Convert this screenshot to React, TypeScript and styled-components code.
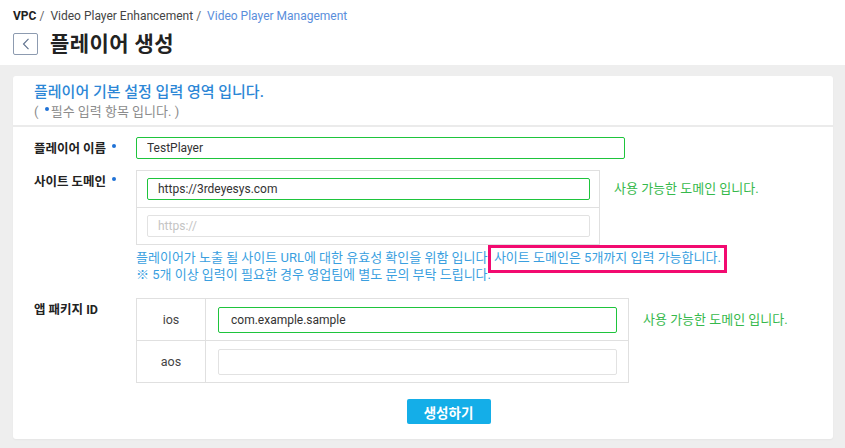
import React from 'react';
import styled, { createGlobalStyle } from 'styled-components';

const GlobalStyle = createGlobalStyle`
  html, body { margin: 0; padding: 0; background: #eeeeee; }
  body { font-family: Roboto, "Noto Sans CJK KR", sans-serif; color: #333; }
  * { box-sizing: border-box; }
`;

const Page = styled.div`
  min-height: 448px;
  background: #eeeeee;
`;

const Header = styled.header`
  background: #fff;
  height: 65px;
  padding: 8px 13px 0;
`;

const Breadcrumb = styled.nav`
  display: flex;
  align-items: center;
  font-size: 12px;
  line-height: 16px;
  color: #444;
`;

const Crumb = styled.span<{ $variant?: 'root' | 'current' }>`
  font-weight: ${(p) => (p.$variant === 'root' ? 700 : 400)};
  color: ${(p) => (p.$variant === 'root' ? '#222' : p.$variant === 'current' ? '#5a8edb' : '#444')};
`;

const Sep = styled.span`
  margin: 0 6px 0 3px;
  color: #666;
`;

const TitleRow = styled.div`
  display: flex;
  align-items: center;
  gap: 12px;
  margin-top: 9px;
`;

const BackButton = styled.button`
  width: 25px;
  height: 22px;
  padding: 0;
  border: 1px solid #8d9bb0;
  border-radius: 2px;
  background: #fff;
  display: flex;
  align-items: center;
  justify-content: center;
`;

const PageTitle = styled.h1`
  margin: 0;
  font-size: 21px;
  letter-spacing: 0.4px;
  line-height: 22px;
  font-weight: 700;
  color: #222;
`;

const Card = styled.section`
  margin: 11px 12px 0 13px;
  background: #fff;
  border-radius: 3px;
  box-shadow: 0 1px 2px rgba(0, 0, 0, 0.04);
`;

const CardHeader = styled.div`
  padding: 6px 20px 4px 21px;
  border-bottom: 2px solid #ebebeb;
`;

const CardTitle = styled.h2`
  margin: 0;
  font-size: 15px;
  line-height: 20px;
  font-weight: 500;
  color: #2c87d6;
`;

const Note = styled.p`
  margin: 1px 0 0;
  font-size: 13px;
  line-height: 18px;
  color: #8c8c8c;
`;

const Dot = styled.span`
  display: inline-block;
  width: 4px;
  height: 4px;
  border-radius: 50%;
  background: #1f72d6;
  vertical-align: 5px;
  margin: 0 2px 0 3px;
`;

const CardBody = styled.div`
  padding: 10px 20px 15px 21px;
`;

const Form = styled.div`
  width: 727px;
  display: flex;
  flex-direction: column;
`;

const Row = styled.div<{ $gap?: number }>`
  display: flex;
  align-items: flex-start;
  margin-top: ${(p) => p.$gap ?? 0}px;
`;

const Label = styled.div`
  width: 102px;
  flex: none;
  padding-top: 1px;
  font-size: 12.5px;
  line-height: 22px;
  font-weight: 700;
  color: #222;
  white-space: nowrap;
`;

const LabelDot = styled(Dot)`
  margin-left: 6px;
`;

const Field = styled.div`
  display: flex;
  flex-direction: column;
`;

const Input = styled.input<{ $valid?: boolean; $tall?: boolean }>`
  display: block;
  width: 100%;
  height: ${(p) => (p.$tall ? 26 : 22)}px;
  padding: 0 0 0 ${(p) => (p.$tall ? 12 : 10)}px;
  border: 1px solid ${(p) => (p.$valid ? '#1ec43c' : '#e2e2e2')};
  border-radius: 2px;
  font-family: Roboto, "Noto Sans CJK KR", sans-serif;
  font-size: 12px;
  color: #333;
  background: #fff;
  outline: none;
  &::placeholder { color: #c4c4c4; }
`;

const NameInputWrap = styled.div`
  width: 489px;
`;

const FieldLine = styled.div`
  display: flex;
  align-items: flex-start;
`;

const DomainBox = styled.div`
  width: 464px;
  border: 1px solid #e0e0e0;
`;

const DomainCell = styled.div`
  padding: 7px 9px 7px 10px;
  & + & { border-top: 1px solid #e0e0e0; }
`;

const Status = styled.div<{ $top: number }>`
  margin-left: 14px;
  padding-top: ${(p) => p.$top}px;
  font-size: 13px;
  line-height: 16px;
  color: #36b94c;
  white-space: nowrap;
`;

const Help = styled.p`
  margin: 4px 0 0;
  font-size: 13px;
  line-height: 17px;
  color: #3a9fdf;
  white-space: nowrap;
`;

const Highlight = styled.span`
  position: relative;
  margin-left: 3px;
  &::after {
    content: '';
    position: absolute;
    left: -6px;
    right: -6px;
    top: -5px;
    bottom: -8px;
    border: 3px solid #f20a70;
  }
`;

const PkgTable = styled.div`
  width: 493px;
  display: grid;
  grid-template-columns: 69px 1fr;
  border: 1px solid #e0e0e0;
`;

const PkgLabel = styled.div<{ $first?: boolean }>`
  display: flex;
  align-items: center;
  justify-content: center;
  border-right: 1px solid #e0e0e0;
  border-top: ${(p) => (p.$first ? 'none' : '1px solid #e0e0e0')};
  font-size: 12.5px;
  color: #444;
`;

const PkgCell = styled.div<{ $first?: boolean }>`
  padding: 8px 11px 7px 12px;
  border-top: ${(p) => (p.$first ? 'none' : '1px solid #e0e0e0')};
`;

const ButtonRow = styled.div`
  display: flex;
  justify-content: center;
  padding-left: 102px;
  margin-top: 16px;
`;

const PrimaryButton = styled.button`
  width: 84px;
  height: 25px;
  border: none;
  border-radius: 2px;
  background: #14aee8;
  color: #fff;
  font-family: Roboto, "Noto Sans CJK KR", sans-serif;
  font-size: 13.5px;
  font-weight: 700;
  padding: 0;
`;

export default function App() {
  return (
    <Page>
      <GlobalStyle />
      <Header>
        <Breadcrumb>
          <Crumb $variant="root">VPC</Crumb>
          <Sep>/</Sep>
          <Crumb>Video Player Enhancement</Crumb>
          <Sep>/</Sep>
          <Crumb $variant="current">Video Player Management</Crumb>
        </Breadcrumb>
        <TitleRow>
          <BackButton aria-label="back">
            <svg width="8" height="12" viewBox="0 0 8 12">
              <path d="M6.5 0.8 L1.5 6 L6.5 11.2" fill="none" stroke="#5c6f8c" strokeWidth="1.1" />
            </svg>
          </BackButton>
          <PageTitle>플레이어 생성</PageTitle>
        </TitleRow>
      </Header>

      <Card>
        <CardHeader>
          <CardTitle>플레이어 기본 설정 입력 영역 입니다.</CardTitle>
          <Note>
            ( <Dot />필수 입력 항목 입니다. )
          </Note>
        </CardHeader>
        <CardBody>
          <Form>
            <Row>
              <Label>
                플레이어 이름<LabelDot />
              </Label>
              <NameInputWrap>
                <Input $valid defaultValue="TestPlayer" />
              </NameInputWrap>
            </Row>

            <Row $gap={10}>
              <Label>
                사이트 도메인<LabelDot />
              </Label>
              <Field>
                <FieldLine>
                  <DomainBox>
                    <DomainCell>
                      <Input $valid defaultValue="https://3rdeyesys.com" />
                    </DomainCell>
                    <DomainCell>
                      <Input placeholder="https://" />
                    </DomainCell>
                  </DomainBox>
                  <Status $top={11}>사용 가능한 도메인 입니다.</Status>
                </FieldLine>
                <Help>
                  플레이어가 노출 될 사이트 URL에 대한 유효성 확인을 위함 입니다.
                  <Highlight>사이트 도메인은 5개까지 입력 가능합니다.</Highlight>
                  <br />※ 5개 이상 입력이 필요한 경우 영업팀에 별도 문의 부탁 드립니다.
                </Help>
              </Field>
            </Row>

            <Row $gap={15}>
              <Label>앱 패키지 ID</Label>
              <FieldLine>
                <PkgTable>
                  <PkgLabel $first>ios</PkgLabel>
                  <PkgCell $first>
                    <Input $tall $valid defaultValue="com.example.sample" />
                  </PkgCell>
                  <PkgLabel>aos</PkgLabel>
                  <PkgCell>
                    <Input $tall />
                  </PkgCell>
                </PkgTable>
                <Status $top={14}>사용 가능한 도메인 입니다.</Status>
              </FieldLine>
            </Row>

            <ButtonRow>
              <PrimaryButton>생성하기</PrimaryButton>
            </ButtonRow>
          </Form>
        </CardBody>
      </Card>
    </Page>
  );
}
